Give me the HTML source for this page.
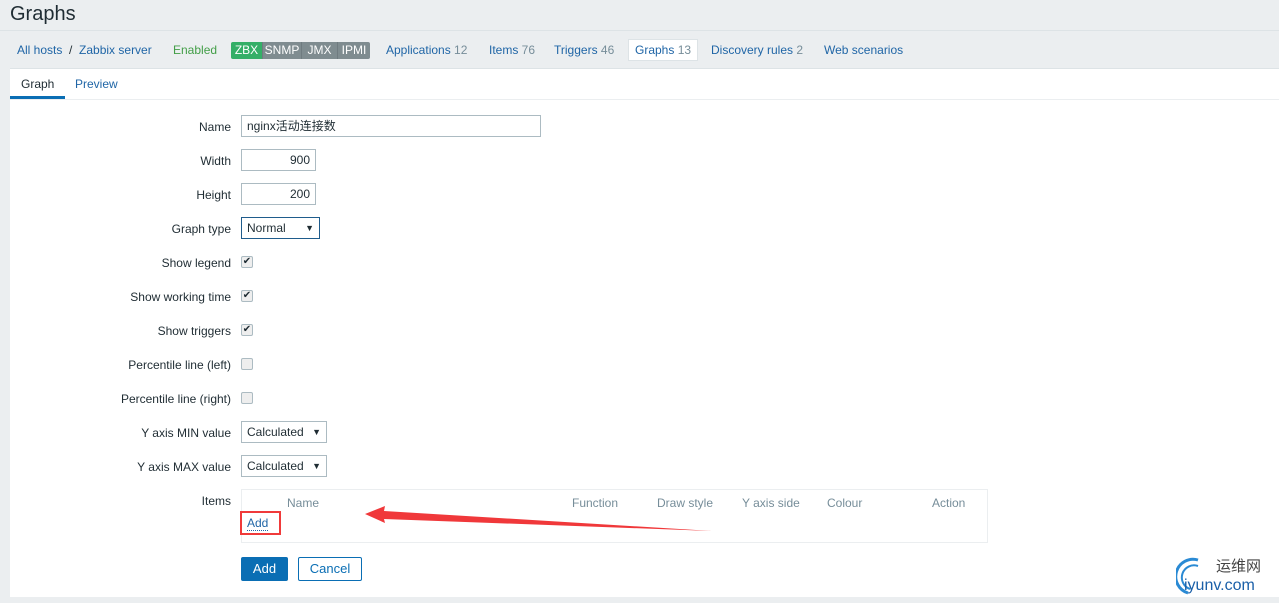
<!DOCTYPE html>
<html><head><meta charset="utf-8"><style>
body{margin:0;width:1279px;height:603px;background:#ebeef0;font-family:"Liberation Sans","Noto Sans CJK SC",sans-serif;font-size:12px;color:#1f2c33;position:relative;overflow:hidden}
.a{position:absolute;white-space:nowrap}
.blue{color:#1f65a6}
.lbl{position:absolute;right:1048px;white-space:nowrap;line-height:14px}
.in{position:absolute;left:241px;height:22px;border:1px solid #acbbc2;background:#fff;box-sizing:border-box;line-height:20px;padding:0 5px}
.cb{position:absolute;left:241px;width:12px;height:12px;border:1px solid #acbbc2;border-radius:2px;background:#eee;box-sizing:border-box;font-size:10px;line-height:10px;text-align:center}
.hd{position:absolute;top:496px;color:#768d99}
.bd{position:absolute;top:42px;height:17px;line-height:17px;color:#fff;text-align:center;background:#7f8c90}
</style></head><body>
<div class="a" style="left:10px;top:3px;font-size:20px;color:#1f2c33">Graphs</div>
<div class="a" style="left:0;top:30px;width:1279px;height:1px;background:#dde3e6"></div>
<div class="a blue" style="left:17px;top:43px">All hosts <span style="color:#1f2c33">&nbsp;/&nbsp;</span> Zabbix server</div>
<div class="a" style="left:173px;top:43px;color:#429e47">Enabled</div>
<div class="bd" style="left:231px;width:31px;background:#34af67;border-radius:2px 0 0 2px">ZBX</div>
<div class="bd" style="left:262px;width:38px;border-left:1px solid #6f7b80">SNMP</div>
<div class="bd" style="left:301px;width:35px;border-left:1px solid #6f7b80">JMX</div>
<div class="bd" style="left:337px;width:32px;border-left:1px solid #6f7b80;border-radius:0 2px 2px 0">IPMI</div>
<div class="a blue" style="left:386px;top:43px">Applications <span style="color:#768d99">12</span></div>
<div class="a blue" style="left:489px;top:43px">Items <span style="color:#768d99">76</span></div>
<div class="a blue" style="left:554px;top:43px">Triggers <span style="color:#768d99">46</span></div>
<div class="a" style="left:628px;top:39px;width:70px;height:22px;background:#fff;border:1px solid #dde3e6;box-sizing:border-box"></div>
<div class="a blue" style="left:635px;top:43px">Graphs <span style="color:#768d99">13</span></div>
<div class="a blue" style="left:711px;top:43px">Discovery rules <span style="color:#768d99">2</span></div>
<div class="a blue" style="left:824px;top:43px">Web scenarios</div>
<div class="a" style="left:10px;top:68px;width:1269px;height:528px;background:#fff;border-top:1px solid #dde3e6"></div>
<div class="a" style="left:10px;top:99px;width:1269px;height:1px;background:#ebeef0"></div>
<div class="a" style="left:21px;top:77px">Graph</div>
<div class="a" style="left:10px;top:96px;width:55px;height:3px;background:#0a6eb4"></div>
<div class="a blue" style="left:75px;top:77px">Preview</div>

<div class="lbl" style="top:120px">Name</div><div class="in" style="top:115px;width:300px">nginx活动连接数</div>
<div class="lbl" style="top:154px">Width</div><div class="in" style="top:149px;width:75px;text-align:right">900</div>
<div class="lbl" style="top:188px">Height</div><div class="in" style="top:183px;width:75px;text-align:right">200</div>
<div class="lbl" style="top:222px">Graph type</div><div class="in" style="top:217px;width:79px;border-color:#1f5c8c">Normal<span style="position:absolute;right:5px;font-size:9px">▼</span></div>
<div class="lbl" style="top:256px">Show legend</div><div class="cb" style="top:256px">✔</div>
<div class="lbl" style="top:290px">Show working time</div><div class="cb" style="top:290px">✔</div>
<div class="lbl" style="top:324px">Show triggers</div><div class="cb" style="top:324px">✔</div>
<div class="lbl" style="top:358px">Percentile line (left)</div><div class="cb" style="top:358px"></div>
<div class="lbl" style="top:392px">Percentile line (right)</div><div class="cb" style="top:392px"></div>
<div class="lbl" style="top:426px">Y axis MIN value</div><div class="in" style="top:421px;width:86px">Calculated<span style="position:absolute;right:5px;font-size:9px">▼</span></div>
<div class="lbl" style="top:460px">Y axis MAX value</div><div class="in" style="top:455px;width:86px">Calculated<span style="position:absolute;right:5px;font-size:9px">▼</span></div>
<div class="lbl" style="top:494px">Items</div>
<div class="a" style="left:241px;top:489px;width:747px;height:54px;border:1px solid #ebeef0;box-sizing:border-box"></div>
<div class="hd" style="left:287px">Name</div>
<div class="hd" style="left:572px">Function</div>
<div class="hd" style="left:657px">Draw style</div>
<div class="hd" style="left:742px">Y axis side</div>
<div class="hd" style="left:827px">Colour</div>
<div class="hd" style="left:932px">Action</div>
<div class="a blue" style="left:247px;top:517px;border-bottom:1px dotted #1f65a6;line-height:13px">Add</div>
<div class="a" style="left:240px;top:511px;width:41px;height:24px;border:2px solid #f03a3a;box-sizing:border-box"></div>
<svg class="a" style="left:0;top:0" width="1279" height="603"><polygon points="365,514 385,506 384,511 712,531 384,519 385,523" fill="#f0383a"/></svg>
<div class="a" style="left:241px;top:557px;width:47px;height:24px;background:#0a6eb4;border-radius:2px;color:#fff;font-size:13px;text-align:center;line-height:24px">Add</div>
<div class="a" style="left:298px;top:557px;width:64px;height:24px;border:1px solid #0a6eb4;box-sizing:border-box;border-radius:2px;color:#0a6eb4;font-size:13px;text-align:center;line-height:22px">Cancel</div>
<svg class="a" style="left:1176px;top:557px" width="30" height="40"><path d="M22 3 A17 17 0 0 0 12 36" stroke="#2a8ad4" stroke-width="3" fill="none"/><path d="M22 9 A12 12 0 0 0 14 32" stroke="#2a8ad4" stroke-width="2" fill="none"/></svg>
<div class="a" style="left:1216px;top:555px;font-size:15px;color:#444">运维网</div>
<div class="a" style="left:1184px;top:577px;font-size:16px;color:#1a5fa8">iyunv.com</div>
</body></html>
